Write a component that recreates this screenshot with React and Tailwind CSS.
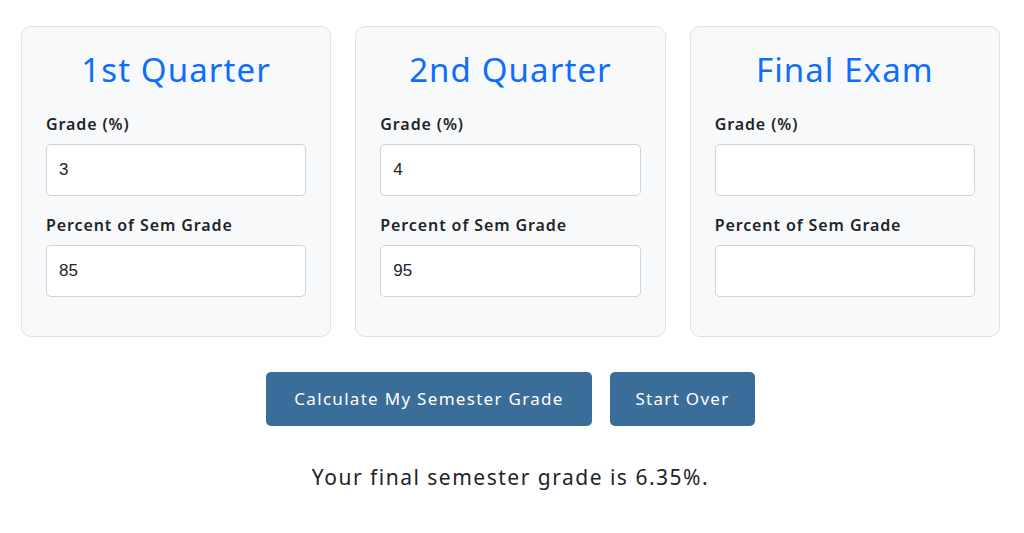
import { useState } from "react";

const sections = [
    { title: "1st Quarter", grade: "3", percent: "85" },
    { title: "2nd Quarter", grade: "4", percent: "95" },
    { title: "Final Exam", grade: "", percent: "" },
];

export default function App() {
    const [values, setValues] = useState(sections);

    function update(i, key, v) {
        setValues((prev) => prev.map((s, idx) => (idx === i ? { ...s, [key]: v } : s)));
    }

    return (
        <div className="min-h-screen bg-white pl-[21px] pr-[24px] pt-[26px] text-[#212529] [font-family:'Noto_Sans',sans-serif]">
            <div className="grid grid-cols-3 gap-6">
                {values.map((s, i) => (
                    <div
                        key={s.title}
                        className="rounded-[10px] border border-[#dee2e6] bg-[#f8f9fa] px-6 pt-6 pb-[39px]"
                    >
                        <h2 className="text-center text-[33px] leading-[38px] font-normal tracking-[1.1px] text-[#0d6efd]">
                            {s.title}
                        </h2>
                        <label className="mt-[23px] block text-base leading-6 font-semibold tracking-[0.9px] text-[#212529]">
                            Grade (%)
                        </label>
                        <input
                            value={s.grade}
                            onChange={(e) => update(i, "grade", e.target.value)}
                            className="mt-2 block h-[52px] w-full rounded-[5px] border border-[#ced4da] bg-white px-3 text-[17px] text-[#212529] outline-none [font-family:'Liberation_Sans',Arial,sans-serif]"
                        />
                        <label className="mt-[17px] block text-base leading-6 font-semibold tracking-[0.9px] text-[#212529]">
                            Percent of Sem Grade
                        </label>
                        <input
                            value={s.percent}
                            onChange={(e) => update(i, "percent", e.target.value)}
                            className="mt-2 block h-[52px] w-full rounded-[5px] border border-[#ced4da] bg-white px-3 text-[17px] text-[#212529] outline-none [font-family:'Liberation_Sans',Arial,sans-serif]"
                        />
                    </div>
                ))}
            </div>

            <div className="mt-[35px] flex justify-center gap-[18px]">
                <button className="h-[54px] w-[326px] rounded-[5px] bg-[#3b6d9b] text-[17px] tracking-[1.3px] text-white">
                    Calculate My Semester Grade
                </button>
                <button className="h-[54px] w-[145px] rounded-[5px] bg-[#3b6d9b] text-[17px] tracking-[1.3px] text-white">
                    Start Over
                </button>
            </div>

            <p className="mt-[37px] text-center text-[21px] leading-7 tracking-[1.5px] text-[#212529]">
                Your final semester grade is 6.35%.
            </p>
        </div>
    );
}
